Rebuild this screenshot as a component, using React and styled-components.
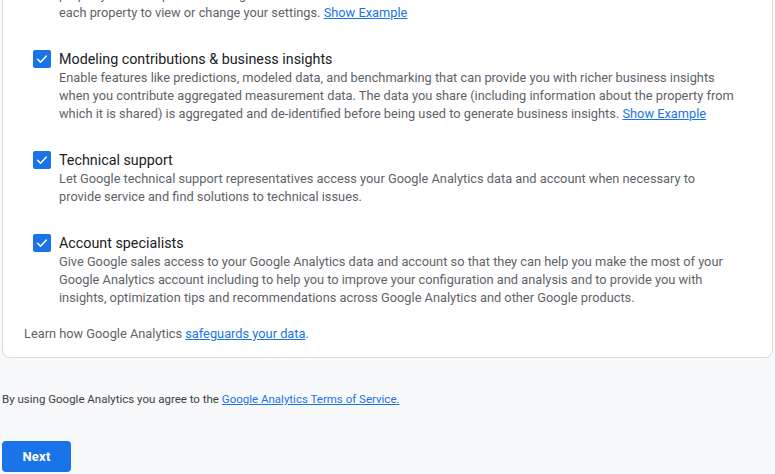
import React from "react";
import styled, { createGlobalStyle } from "styled-components";

const GlobalStyle = createGlobalStyle`
  html, body {
    margin: 0;
    padding: 0;
    background: #f8f9fa;
    font-family: Roboto, "Liberation Sans", Arial, sans-serif;
    overflow: hidden;
  }
`;

const items = [
  {
    title: "Google products & services",
    text: [
      "If you have enabled Google signals, this setting will also apply to authenticated visitation data which is associated with Google user accounts. If you disable this option, data can still flow to other Google products explicitly linked to your property. Visit the product linking section in",
      "each property to view or change your settings.",
    ],
    example: true,
  },
  {
    title: "Modeling contributions & business insights",
    text: [
      "Enable features like predictions, modeled data, and benchmarking that can provide you with richer business insights when you contribute aggregated measurement data. The data you share (including information about the property from which it is shared) is aggregated and de-identified before being used to generate business insights.",
    ],
    example: true,
  },
  {
    title: "Technical support",
    text: [
      "Let Google technical support representatives access your Google Analytics data and account when necessary to provide service and find solutions to technical issues.",
    ],
  },
  {
    title: "Account specialists",
    text: [
      "Give Google sales access to your Google Analytics data and account so that they can help you make the most of your Google Analytics account including to help you to improve your configuration and analysis and to provide you with insights, optimization tips and recommendations across Google Analytics and other Google products.",
    ],
  },
];

const Check = () => (
  <Box>
    <svg width="14" height="14" viewBox="0 0 24 24">
      <path
        d="M4.5 12.5l5 5L19.5 7"
        fill="none"
        stroke="#fff"
        strokeWidth="2.6"
        strokeLinecap="round"
        strokeLinejoin="round"
      />
    </svg>
  </Box>
);

const App = () => {
  return (
    <>
      <GlobalStyle />
      <Page>
        <Card>
          {items.map((item, index) => (
            <Row key={index}>
              <Check />
              <Body>
                <Title>{item.title}</Title>
                <Desc>
                  {item.text.map((part, i) => (
                    <React.Fragment key={i}>
                      {i > 0 && <br />}
                      {part}
                    </React.Fragment>
                  ))}
                  {item.example && (
                    <>
                      {" "}
                      <Link href="#">Show Example</Link>
                    </>
                  )}
                </Desc>
              </Body>
            </Row>
          ))}
          <Learn>
            Learn how Google Analytics <Link href="#">safeguards your data</Link>.
          </Learn>
        </Card>

        <Terms>
          By using Google Analytics you agree to the{" "}
          <Link href="#">Google Analytics Terms of Service.</Link>
        </Terms>

        <NextButton>Next</NextButton>
      </Page>
    </>
  );
};

const Page = styled.div`
  height: 474px;
  overflow: hidden;
  padding: 0 2px;
  box-sizing: border-box;
  display: flex;
  flex-direction: column;
  justify-content: flex-end;
  align-items: flex-start;

  & > * {
    flex-shrink: 0;
  }
`;

const Card = styled.div`
  align-self: stretch;
  background: #fff;
  border: 1px solid #dadce0;
  border-radius: 8px;
  padding: 0 24px 14px 21px;
  display: flex;
  flex-direction: column;
  gap: 27px;
`;

const Row = styled.div`
  display: flex;
  gap: 8px;
  padding-left: 9px;
  padding-right: 8px;
`;

const Box = styled.div`
  flex-shrink: 0;
  width: 18px;
  height: 18px;
  margin-top: 1px;
  border-radius: 2px;
  background: #1a73e8;
  display: flex;
  align-items: center;
  justify-content: center;
`;

const Body = styled.div`
  flex: 1;
  min-width: 0;
`;

const Title = styled.div`
  font-size: 14.3px;
  line-height: 20px;
  color: #202124;
`;

const Desc = styled.div`
  font-size: 12.8px;
  line-height: 18px;
  color: #5f6368;
`;

const Link = styled.a`
  color: #1a73e8;
  text-decoration: underline;
`;

const Learn = styled.div`
  font-size: 12.8px;
  line-height: 18px;
  color: #5f6368;
  margin-top: -9px;
`;

const Terms = styled.div`
  font-size: 11.5px;
  line-height: 16px;
  color: #3c4043;
  margin-top: 33px;
`;

const NextButton = styled.button`
  margin-top: 34px;
  margin-bottom: 2px;
  width: 69px;
  height: 31px;
  border: none;
  border-radius: 4px;
  background: #1a73e8;
  color: #fff;
  font-family: Roboto, "Liberation Sans", Arial, sans-serif;
  font-size: 13px;
  font-weight: 700;
  letter-spacing: 0.2px;
  cursor: pointer;
`;

export default App;
